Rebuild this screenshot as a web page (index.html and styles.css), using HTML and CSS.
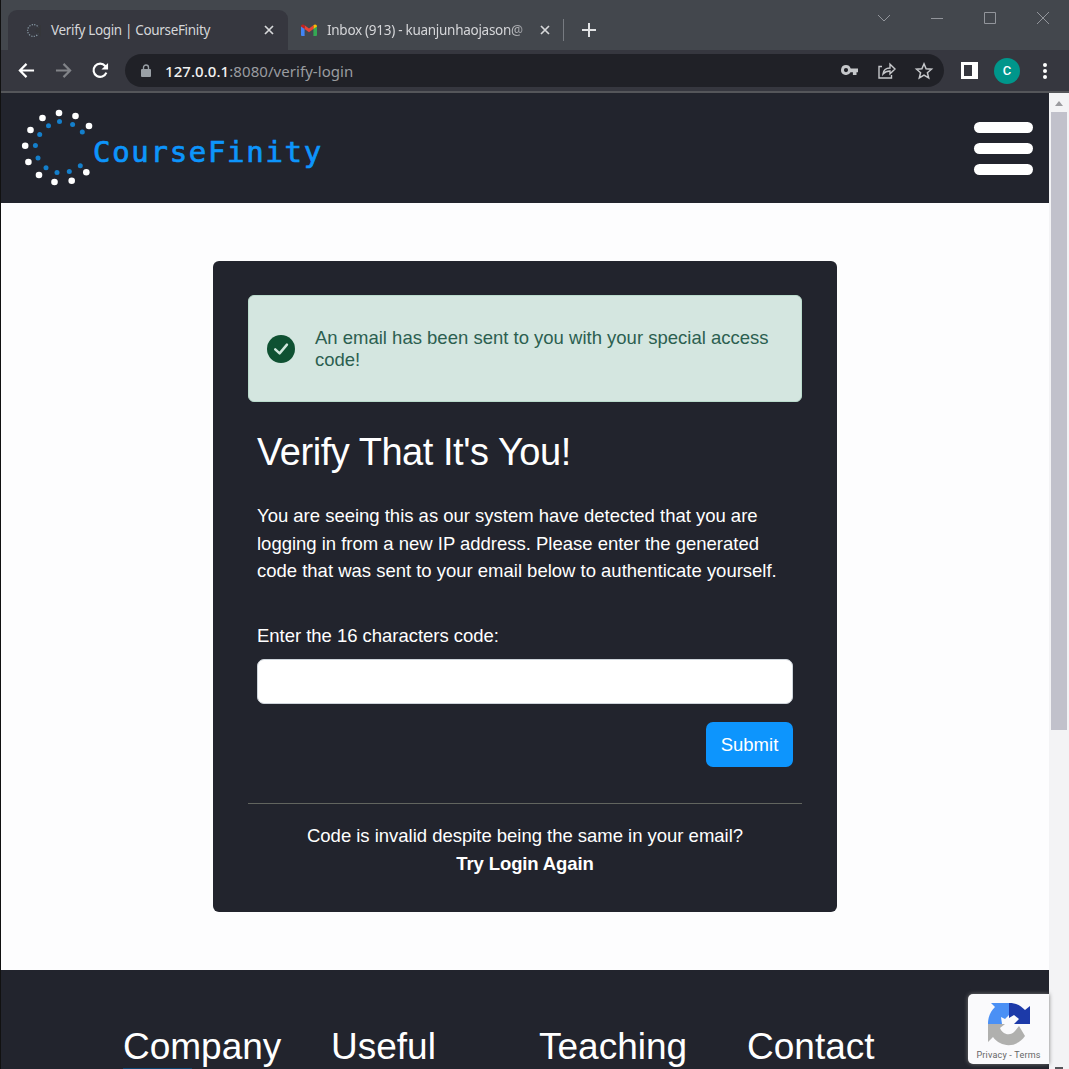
FILE: index.html
```html
<!DOCTYPE html>
<html lang="en">
<head>
<meta charset="utf-8">
<title>Verify Login | CourseFinity</title>
<link rel="stylesheet" href="styles.css">
</head>
<body>
<div class="window">
  <header class="chrome">
    <div class="tabs">
      <div class="tab active">
        <svg class="favicon" viewBox="0 0 16 16"><circle cx="8" cy="8" r="6.3" fill="none" stroke="#8b9eaa" stroke-width="1.3" stroke-dasharray="1.3 1.5" pathLength="40" /><path d="M9 8 16 2v12z" fill="#35363a"/></svg>
        <span class="tab-title">Verify Login | CourseFinity</span>
        <svg class="tab-close" viewBox="0 0 10 10"><path d="M1 1l8 8M9 1L1 9"/></svg>
      </div>
      <div class="tab second">
        <svg class="gmail" viewBox="0 0 16 12"><path d="M0 2v9q0 1 1 1h2.6V4z" fill="#4285f4"/><path d="M16 2v9q0 1-1 1h-2.6V4z" fill="#34a853"/><path d="M12.4 1.3V5L16 2.4C16 .3 13.8-.3 12.4 1.3z" fill="#fbbc04"/><path d="M3.6 5V1.3L8 4.6l4.4-3.3V5L8 8.3z" fill="#ea4335"/><path d="M0 2.4L3.6 5V1.3C2.2-.3 0 .3 0 2.4z" fill="#c5221f"/></svg>
        <span class="tab-title faded">Inbox (913) - kuanjunhaojason@</span>
        <svg class="tab-close" viewBox="0 0 10 10"><path d="M1 1l8 8M9 1L1 9"/></svg>
      </div>
      <span class="tab-separator"></span>
      <svg class="new-tab" viewBox="0 0 14 14"><path d="M7 0v14M0 7h14"/></svg>
      <div class="window-controls">
        <svg viewBox="0 0 12 12"><path d="M0 3l6 6 6-6"/></svg>
        <svg viewBox="0 0 12 12"><path d="M0 6.5h12"/></svg>
        <svg viewBox="0 0 12 12"><path d="M.5.5h11v11H.5z"/></svg>
        <svg viewBox="0 0 12 12"><path d="M0 0l12 12M12 0L0 12"/></svg>
      </div>
    </div>
    <div class="toolbar">
      <svg class="nav back" viewBox="0 0 18 18"><path d="M17 9H2M9 2L2 9l7 7"/></svg>
      <svg class="nav forward" viewBox="0 0 18 18"><path d="M1 9h15M9 2l7 7-7 7"/></svg>
      <svg class="nav reload" viewBox="0 0 18 18"><path d="M15.2 11.3A7 7 0 1 1 14 4.2l2 2.3"/><path d="M17 1v7h-7z" fill="#fff" stroke="none"/></svg>
      <div class="address">
        <svg class="lock" viewBox="0 0 10 13"><path d="M2.5 6V3.5a2.5 2.5 0 0 1 5 0V6" fill="none" stroke="#9aa0a6" stroke-width="1.4"/><rect y="5" width="10" height="8" rx="1" fill="#9aa0a6"/></svg>
        <span class="url"><b>127.0.0.1</b>:8080/verify-login</span>
        <svg class="key" viewBox="0 0 17 11"><path fill-rule="evenodd" d="M5 0a5 5 0 0 1 4.7 3.4H17v3.8h-1.5V10h-3.6V7.2H9.5A5 5 0 1 1 5 0zm0 3a2.1 2.1 0 1 0 0 4.2A2.1 2.1 0 0 0 5 3z" fill="#c5c7ca"/></svg>
        <svg class="share" viewBox="0 0 18 16"><path d="M4 3.5H1V15h12.5v-3M5 11c.5-4 3-6 7-6V1.2L17 6l-5 4.800V8C9 8 6.800 9 5 11z"/></svg>
        <svg class="star" viewBox="0 0 18 18"><path d="M9 1.800l2.100 4.900 5.400.5-4.100 3.500 1.300 5.200L9 13.100l-4.700 2.800 1.300-5.200-4.100-3.500 5.400-.5z"/></svg>
      </div>
      <svg class="panel" viewBox="0 0 17 17"><path fill-rule="evenodd" d="M0 0h17v17H0zM3 3v11h8V3z" fill="#fff"/></svg>
      <span class="avatar">C</span>
      <svg class="dots" viewBox="0 0 4 16"><circle cx="2" cy="2" r="2"/><circle cx="2" cy="8" r="2"/><circle cx="2" cy="14" r="2"/></svg>
    </div>
  </header>
  <div class="viewport">
    <div class="page">
      <nav class="navbar">
        <div class="brand">
          <svg class="brand-mark" viewBox="20 106 76 84">
            <g fill="#fff"><circle cx="59" cy="113" r="3.300"/><circle cx="75.500" cy="116" r="3.300"/><circle cx="89" cy="126" r="3.300"/><circle cx="42.500" cy="118" r="3.300"/><circle cx="30.500" cy="130" r="3.300"/><circle cx="25.200" cy="145.700" r="3.300"/><circle cx="28.400" cy="162" r="3.300"/><circle cx="39" cy="175" r="3.300"/><circle cx="54.500" cy="182" r="3.300"/><circle cx="71.700" cy="180.800" r="3.300"/><circle cx="86.300" cy="172.300" r="3.300"/></g>
            <g fill="#147fcb"><circle cx="59.500" cy="121.500" r="2.500"/><circle cx="72.600" cy="124.500" r="2.500"/><circle cx="82.300" cy="132" r="2.500"/><circle cx="48.500" cy="125.700" r="2.500"/><circle cx="39.700" cy="134.500" r="2.500"/><circle cx="35.400" cy="145.600" r="2.500"/><circle cx="38" cy="158" r="2.500"/><circle cx="46" cy="167.700" r="2.500"/><circle cx="57" cy="172.500" r="2.500"/><circle cx="69.300" cy="171.500" r="2.500"/><circle cx="80.300" cy="165.800" r="2.500"/></g>
          </svg>
          <span class="brand-name">CourseFinity</span>
        </div>
        <div class="menu"><i></i><i></i><i></i></div>
      </nav>
      <main class="content">
        <section class="card">
          <div class="alert">
            <svg class="check" viewBox="0 0 16 16"><circle cx="8" cy="8" r="8" fill="#0f5132"/><path d="M4.700 8.200L7.200 10.500 11.400 5.500" fill="none" stroke="#d1e7dd" stroke-width="1.400" stroke-linecap="round" stroke-linejoin="round"/></svg>
            <p>An email has been sent to you with your special access code!</p>
          </div>
          <div class="form">
            <h1>Verify That It's You!</h1>
            <p class="intro">You are seeing this as our system have detected that you are<br>logging in from a new IP address. Please enter the generated<br>code that was sent to your email below to authenticate yourself.</p>
            <label for="code">Enter the 16 characters code:</label>
            <input id="code" type="text">
            <button type="button">Submit</button>
          </div>
          <div class="help"><span>Code is invalid despite being the same in your email?</span><b>Try Login Again</b></div>
        </section>
      </main>
      <footer class="footer">
        <h2 class="marked">Company</h2><h2>Useful</h2><h2>Teaching</h2><h2>Contact</h2>
      </footer>
      <aside class="recaptcha">
        <svg viewBox="0 0 44 44"><path d="M1 22C1 14 4 9 8 5L4 1h18v12l-4 4-4-2 1 7z" fill="#4a90f5"/><path d="M22 1c8 0 12 3 16 7l5-4v18H27l5-5-5-4-5 3z" fill="#1c3aa9"/><path d="M1 22h17l-5 4c2 6 10 9 15 3l4-5 6 10C30 46 14 46 6 35l-5 5z" fill="#b0b0ae"/></svg>
        <span>Privacy - Terms</span>
      </aside>
    </div>
    <div class="scrollbar"><span class="up"></span><span class="thumb"></span><span class="down"></span></div>
  </div>
</div>
</body>
</html>
```
FILE: styles.css
```css
* { box-sizing: border-box; }
body { margin: 0; font-family: "Liberation Sans", Arial, sans-serif; }
h1, h2, p { margin: 0; font-weight: 400; }
svg { display: block; flex: none; overflow: visible; }
.window { width: 1069px; height: 1069px; overflow: hidden; display: flex; flex-direction: column; border-left: 1px solid #111; }
.chrome { height: 93px; flex: none; background: #36373f; border-bottom: 2px solid #55565a; font-family: "Noto Sans", sans-serif; }
.tabs { height: 50px; display: flex; align-items: center; background: #43474d; padding: 10px 20px 0 7px; }
.tab { display: flex; align-items: center; height: 40px; }
.active { width: 280px; padding: 0 14px 0 18px; border-radius: 9px 9px 0 0; background: #36373f; }
.favicon { width: 15px; height: 15px; margin-right: 10px; }
.tab-title { flex: 1; font-size: 13.500px; letter-spacing: -.34px; color: #d5d6d9; white-space: nowrap; }
.tab-close { width: 10px; height: 10px; fill: none; stroke: #d7d8da; stroke-width: 1.700; }
.second { width: 262px; padding-left: 13px; }
.gmail { width: 16px; height: 12px; margin-right: 10px; }
.second .tab-title { flex: none; width: 200px; margin-right: 13px; letter-spacing: -.28px; }
.faded { -webkit-mask-image: linear-gradient(90deg, #000 90%, #0006 100%); mask-image: linear-gradient(90deg, #000 90%, #0006 100%); }
.tab-separator { width: 1px; height: 22px; margin-left: 13px; background: #777b81; }
.new-tab { width: 14px; height: 14px; margin-left: 18px; stroke: #e2e3e5; stroke-width: 2; }
.window-controls { display: flex; gap: 41px; margin: -25px 0 0 auto; }
.window-controls svg { width: 12px; height: 12px; fill: none; stroke: #92959b; stroke-width: 1; }
.toolbar { height: 41px; display: flex; align-items: center; padding: 0 22px 0 17px; }
.nav { width: 17px; height: 17px; fill: none; stroke: #fff; stroke-width: 2.300; }
.forward { margin-left: 20px; stroke: #818388; }
.reload { margin-left: 20px; }
.address { display: flex; align-items: center; width: 819px; height: 33px; margin-left: 16px; padding: 0 11px 0 16px; border-radius: 17px; background: #202127; }
.lock { width: 10px; height: 13px; margin-right: 14px; }
.url { flex: 1; font-size: 15px; letter-spacing: .06px; color: #9a9ca0; }
.url b { font-weight: 500; color: #f2f2f2; }
.key { width: 17px; height: 11px; }
.share { width: 18px; height: 16px; margin: 0 19px 0 20px; fill: none; stroke: #c5c7ca; stroke-width: 1.400; }
.star { width: 18px; height: 18px; fill: none; stroke: #c5c7ca; stroke-width: 1.500; }
.panel { width: 17px; height: 17px; margin-left: 17px; }
.avatar { width: 26px; height: 26px; margin-left: 16px; border-radius: 50%; background: #00968b; color: #fff; text-align: center; font: 500 13px/26px Roboto, sans-serif; }
.dots { width: 4px; height: 16px; margin-left: auto; fill: #fff; }
.viewport { flex: 1; min-height: 0; display: flex; }
.page { width: 1048px; display: flex; flex-direction: column; position: relative; background: #fdfdfe; }
.navbar { height: 110px; flex: none; display: flex; justify-content: space-between; align-items: center; padding: 0 16px 0 19px; background: #22242d; }
.brand { display: flex; align-items: center; }
.brand-mark { width: 76px; height: 84px; }
.brand-name { margin: 7px 0 0 -3px; font: 29px/40px "DejaVu Sans Mono", monospace; letter-spacing: 1.700px; color: #0d95fc; -webkit-text-stroke: .7px #0d95fc; }
.menu { display: grid; gap: 10px; }
.menu i { width: 59px; height: 11px; border-radius: 6px; background: #fff; }
.content { height: 767px; flex: none; padding: 58px 0 0 212px; }
.card { width: 624px; height: 651px; padding: 34px 35px; background: #22242d; border-radius: 6px; color: #fff; }
.alert { height: 107px; display: flex; align-items: center; padding: 0 18px; border: 1px solid #badbcc; border-radius: 6px; background: #d4e6e0; color: #2c5f50; font-size: 18.500px; line-height: 22px; }
.check { width: 28px; height: 28px; margin-right: 20px; }
.alert p { width: 470px; }
.form { display: flex; flex-direction: column; padding: 27px 9px 0; }
h1 { font-size: 38px; line-height: 46px; letter-spacing: -.46px; }
.intro { margin-top: 27px; font-size: 18.500px; line-height: 27.700px; letter-spacing: -.01px; white-space: nowrap; }
.form label { margin-top: 37px; font-size: 18.500px; line-height: 28px; letter-spacing: -.03px; }
.form input { height: 45px; margin-top: 9px; border: 1px solid #ced4da; border-radius: 7px; background: #fff; }
.form button { align-self: flex-end; width: 87px; height: 45px; margin-top: 18px; padding: 0; border: 0; border-radius: 7px; background: #0d95fd; color: #fff; font: 18.500px "Liberation Sans", Arial, sans-serif; }
.help { display: flex; flex-direction: column; align-items: center; margin-top: 36px; padding-top: 18px; border-top: 1px solid #62655f; font-size: 18.500px; line-height: 28px; letter-spacing: -.02px; }
.help b { letter-spacing: -.12px; }
.footer { flex: 1; display: grid; grid-template-columns: repeat(4, 208px); padding: 56px 0 0 122px; background: #22242d; color: #fff; overflow: hidden; }
.footer h2 { font-size: 37px; line-height: 42px; }
.footer .marked { background: linear-gradient(#0d4670, #0d4670) 0 42px / 69px 1px no-repeat; }
.recaptcha { position: absolute; right: 0; bottom: 5px; width: 81px; height: 70px; padding: 8px 0 0; border-radius: 5px 0 0 5px; background: #fafafc; box-shadow: 0 0 4px #777; display: flex; flex-direction: column; align-items: center; }
.recaptcha svg { width: 44px; height: 44px; }
.recaptcha span { margin-top: 3px; font: 9px/12px Roboto, sans-serif; color: #666; letter-spacing: .2px; }
.scrollbar { width: 20px; display: flex; flex-direction: column; align-items: center; background: #f3f3f5; }
.up { border: 4px solid transparent; border-top: 0; border-bottom: 5px solid #9b9b9f; margin: 8px 0 6px; }
.thumb { width: 16px; height: 618px; background: #c1c1cb; }
.down { width: 8px; height: 2px; margin-top: auto; background: #55565a; }
```
